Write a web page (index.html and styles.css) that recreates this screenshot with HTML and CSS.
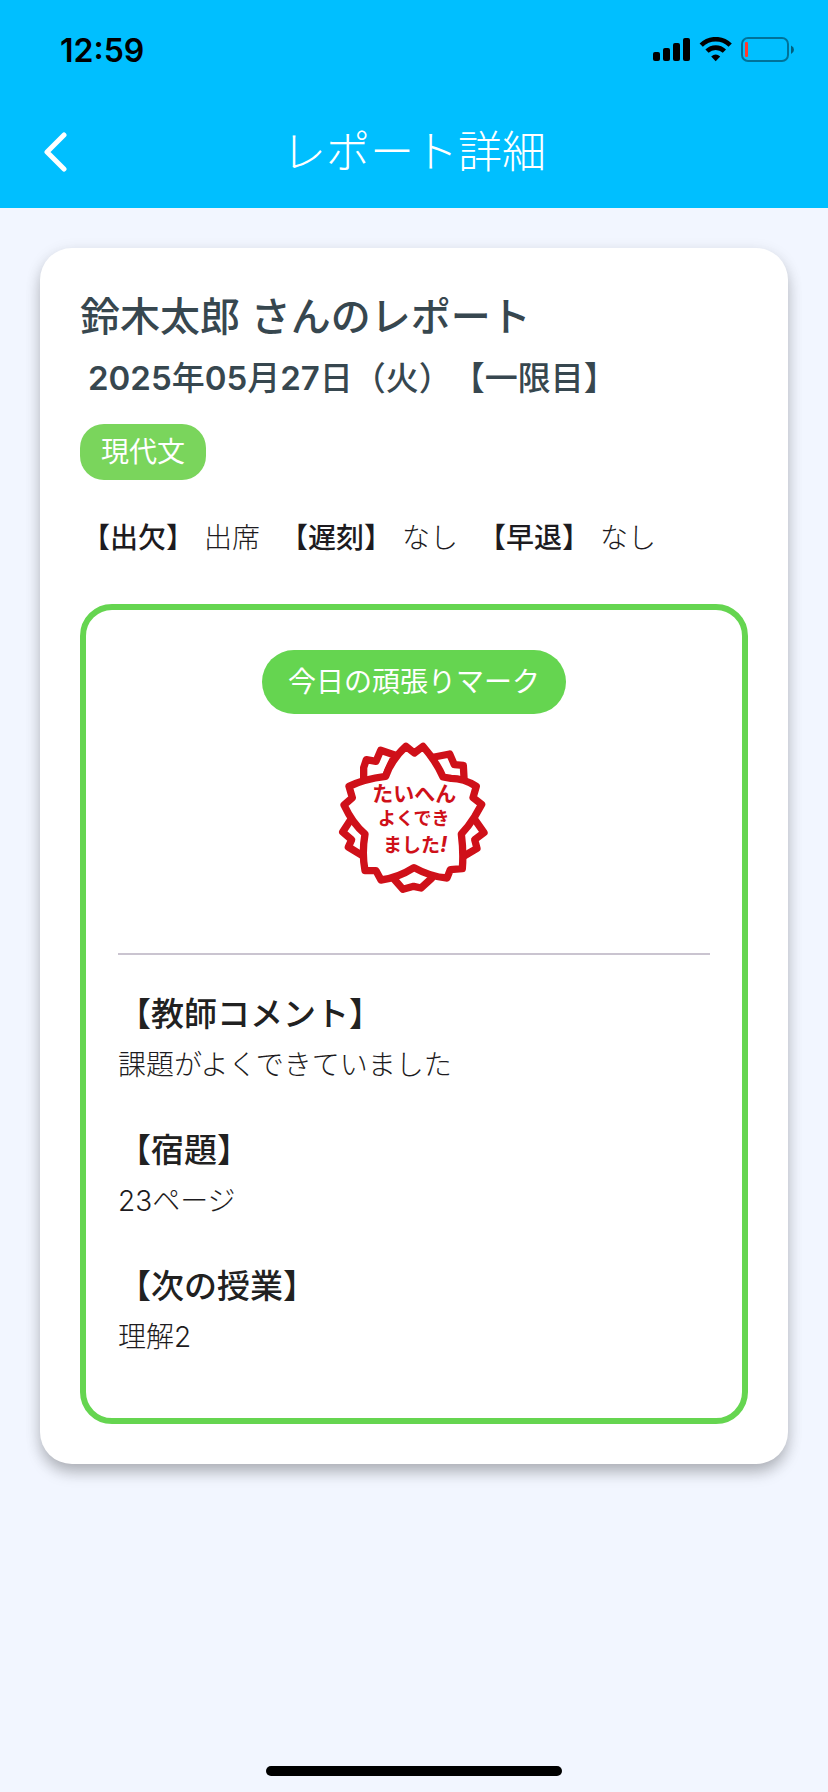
FILE: index.html
```html
<!DOCTYPE html>
<html lang="ja">
<head>
    <meta charset="UTF-8">
    <meta name="viewport" content="width=device-width, initial-scale=1">
    <title>レポート詳細</title>
    <link rel="stylesheet" href="styles.css">
</head>
<body>
<header class="header">
    <div class="status-bar">
        <span class="time">12:59</span>
        <svg class="status-icons" width="142" height="26" viewBox="0 0 142 26">
            <rect x="0" y="15" width="7" height="9" rx="2"/>
            <rect x="10" y="11" width="7" height="13" rx="2"/>
            <rect x="20" y="6" width="7" height="18" rx="2"/>
            <rect x="30" y="1" width="7" height="23" rx="2"/>
            <g fill="none" stroke="#000" stroke-width="4.6">
                <path d="M48.2 8.2A20.5 20.5 0 0 1 77.2 8.2"/>
                <path d="M54 14.2A12.4 12.4 0 0 1 71.4 14.2"/>
            </g>
            <path d="M62.7 24.2L58.2 19.4Q62.7 15.6 67.2 19.4Z"/>
            <rect x="89" y="1" width="46" height="23" rx="6" fill="none" stroke="#000" stroke-opacity=".4" stroke-width="2"/>
            <path d="M138 8.5Q141 10 141 12.7T138 17Z" fill-opacity=".5"/>
            <rect x="92" y="5" width="3" height="15" rx="1" fill="#ff3b30"/>
        </svg>
    </div>
    <div class="nav">
        <button class="back" type="button" aria-label="戻る">
            <svg width="24" height="40" viewBox="0 0 24 40"><path d="M20 3L3 20L20 37"/></svg>
        </button>
        <h1>レポート詳細</h1>
    </div>
</header>
<main class="card">
    <h2 class="name">鈴木太郎 さんのレポート</h2>
    <p class="date"><b>2025</b>年<b>05</b>月<b>27</b>日（火）【一限目】</p>
    <span class="subject">現代文</span>
    <dl class="attendance">
        <div><dt>【出欠】</dt><dd>出席</dd></div>
        <div><dt>【遅刻】</dt><dd>なし</dd></div>
        <div><dt>【早退】</dt><dd>なし</dd></div>
    </dl>
    <div class="report">
        <span class="mark-label">今日の頑張りマーク</span>
        <svg class="stamp" width="160" height="160" viewBox="42 42 480 480">
            <g class="stamp-line">
                <!-- 後ろの花びら -->
                <path d="M131 158V128L139 104L168 109L182 76L226 91Q210 118 195 158"/>
                <path d="M343 96L389 87L403 119L430 121L432 158"/>
                <path d="M92 284L68 321L95 344L85 366L126 391"/>
                <path d="M464 283L492 323L464 344L471 370L432 393"/>
                <path d="M222 462L249 493L281 484L303 489L335 460"/>
                <!-- 前の花びら -->
                <path d="M197 154Q214 104 258 64L283 84L309 64Q348 108 369 156L393 160Q432 160 469 184L459 218L485 238L464 275Q446 304 424 327Q431 381 427 431L391 434L381 459Q332 456 282 428Q233 459 183 465L168 437L135 437Q125 384 135 327Q98 296 72 240L97 218L87 184Q132 162 197 154Z"/>
            </g>
            <g class="stamp-text">
                <text x="283" y="227" font-size="63">たいへん</text>
                <text x="281" y="300" font-size="54">よくでき</text>
                <text x="286" y="381" font-size="57">ました<tspan font-style="italic" font-size="66">!</tspan></text>
            </g>
        </svg>
        <hr>
        <section>
            <h3>【教師コメント】</h3>
            <p>課題がよくできていました</p>
        </section>
        <section>
            <h3>【宿題】</h3>
            <p>23ページ</p>
        </section>
        <section>
            <h3>【次の授業】</h3>
            <p>理解2</p>
        </section>
    </div>
</main>
<div class="home-bar"></div>
</body>
</html>
```
FILE: styles.css
```css
*{
    margin: 0;
    padding: 0;
    box-sizing: border-box;
}
body{
    display: flex;
    flex-direction: column;
    min-height: 100vh;
    background: #f2f6ff;
    color: #1d1b20;
    font-family: Inter, "Noto Sans CJK JP", sans-serif;
    font-size: 28px;
    text-spacing-trim: space-all;
}
.header{
    background: #00bfff;
    padding-bottom: 4px;
}
.status-bar{
    display: flex;
    justify-content: space-between;
    align-items: center;
    height: 100px;
    padding: 0 33px 0 60px;
}
.time{
    color: #000;
    font-size: 32px;
    font-weight: 600;
}
.nav{
    display: grid;
    grid-template-columns: 80px 1fr 80px;
    align-items: center;
    height: 104px;
}
.back{
    height: 80px;
    padding-left: 32px;
    border: 0;
    background: none;
    cursor: pointer;
}
.back svg{
    display: block;
    margin: 0 auto;
    fill: none;
    stroke: #fff;
    stroke-width: 5;
    stroke-linecap: round;
    stroke-linejoin: round;
}
.nav h1{
    padding-bottom: 6px;
    color: #fff;
    font-size: 44px;
    font-weight: 300;
    text-align: center;
}
.card{
    margin: 40px;
    padding: 40px;
    border-radius: 32px;
    background: #fff;
    box-shadow: 0 10px 16px -2px rgba(0,0,0,.22), 0 4px 16px rgba(0,0,0,.12);
}
.name{
    color: #37474f;
    font-size: 40px;
    font-weight: 500;
    line-height: 58px;
}
.date{
    padding-left: 8px;
    color: #37474f;
    font-size: 33px;
    font-weight: 500;
    line-height: 64px;
}
.date b{
    font-weight: 600;
}
.subject{
    display: block;
    width: fit-content;
    margin-top: 14px;
    padding: 0 21px;
    border-radius: 24px;
    background: #7ad55c;
    color: #fff;
    font-weight: 400;
    line-height: 56px;
}
.attendance{
    display: flex;
    flex-wrap: wrap;
    gap: 20px;
    margin: 34px 0 42px;
    padding-left: 2px;
    line-height: 48px;
}
.attendance div{
    display: flex;
    gap: 10px;
}
.attendance dt{
    font-weight: 500;
}
.attendance dd{
    font-weight: 300;
}
.report{
    padding: 40px 32px 56px;
    border: 6px solid #65d550;
    border-radius: 32px;
}
.mark-label{
    display: block;
    width: fit-content;
    margin: 0 auto;
    padding: 0 26px;
    border-radius: 32px;
    background: #65d550;
    color: #fff;
    font-weight: 400;
    line-height: 64px;
}
.stamp{
    display: block;
    margin: 25px auto 54px;
}
.stamp-line{
    fill: #fff;
    stroke: #cf1019;
    stroke-width: 22;
    stroke-linejoin: round;
    stroke-linecap: round;
}
.stamp-text{
    fill: #cf1019;
    font-weight: 700;
    text-anchor: middle;
}
hr{
    height: 2px;
    margin-bottom: 33px;
    border: 0;
    background: #cac4d0;
}
section + section{
    margin-top: 34px;
}
section h3{
    color: #212121;
    font-size: 33px;
    font-weight: 500;
    line-height: 52px;
}
section p{
    font-weight: 300;
    line-height: 50px;
}
.home-bar{
    width: 296px;
    height: 10px;
    margin: auto auto 16px;
    border-radius: 5px;
    background: #000;
}
```
